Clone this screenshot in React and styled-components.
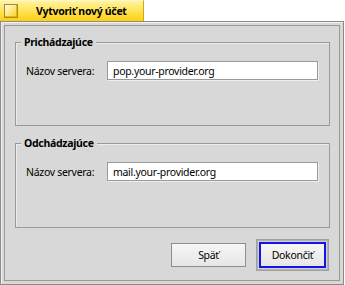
import React from "react";
import styled, { createGlobalStyle } from "styled-components";

const GlobalStyle = createGlobalStyle`
  html, body {
    margin: 0;
    padding: 0;
    background: #ffffff;
  }
  body {
    font-family: "Noto Sans", "DejaVu Sans", sans-serif;
    font-size: 10.5px;
    letter-spacing: -0.3px;
    color: #000000;
  }
`;

const Window = styled.div`
  width: 344px;
  display: flex;
  flex-direction: column;
`;

const Tab = styled.div`
  width: 144px;
  height: 21px;
  box-sizing: border-box;
  display: flex;
  align-items: center;
  padding-left: 4px;
  background: linear-gradient(to bottom, #fff3a6 0%, #ffe55c 45%, #ffcf10 100%);
  border-right: 1px solid #d9a600;
  border-top: 1px solid #fff6c0;
`;

const CloseBox = styled.div`
  flex: none;
  width: 14px;
  height: 14px;
  box-sizing: border-box;
  border: 1px solid #a38a36;
  background: linear-gradient(135deg, #fffbe0 0%, #ffe98a 45%, #ffce20 100%);
  box-shadow: inset -1px -1px 0 #e8b800;
`;

const Title = styled.span`
  margin-left: 18px;
  font-weight: bold;
  white-space: nowrap;
`;

const Frame = styled.div`
  height: 264px;
  box-sizing: border-box;
  border: 1px solid #8a8a8a;
  background: #d8d8d8;
  padding: 3px;
  box-shadow: inset 1px 1px 0 #f2f2f2;
`;

const Content = styled.div`
  height: 100%;
  box-sizing: border-box;
  border: 1px solid #999999;
  background: #d8d8d8;
  padding: 16px 9px 0 10px;
  display: flex;
  flex-direction: column;
`;

const Group = styled.div`
  height: ${(p) => p.$h}px;
  box-sizing: border-box;
  border: 1px solid #9a9a9a;
  box-shadow: inset 1px 1px 0 #ececec;
  display: flex;
  flex-direction: column;
  margin-bottom: ${(p) => p.$gap || 0}px;
`;

const Legend = styled.span`
  align-self: flex-start;
  margin: -9px 0 0 5px;
  padding: 0 3px;
  line-height: 16px;
  background: #d8d8d8;
  font-weight: bold;
`;

const Row = styled.div`
  display: flex;
  align-items: center;
  margin: 11px 0 0 10px;
`;

const Label = styled.span`
  width: 81px;
`;

const Field = styled.div`
  width: 211px;
  height: 19px;
  box-sizing: border-box;
  background: #ffffff;
  border: 1px solid #9a9a9a;
  box-shadow: 1px 1px 0 #eeeeee;
  display: flex;
  align-items: center;
  padding-left: 5px;
`;

const Buttons = styled.div`
  display: flex;
  justify-content: flex-end;
  align-items: center;
  gap: 10px;
  margin-top: 11px;
  padding-right: 1px;
`;

const Button = styled.div`
  width: 75px;
  height: 24px;
  box-sizing: border-box;
  border: 1px solid #8e8e8e;
  background: linear-gradient(to bottom, #f6f6f6 0%, #e6e6e6 100%);
  display: flex;
  align-items: center;
  justify-content: center;
`;

const DefaultFrame = styled.div`
  width: 73px;
  height: 32px;
  box-sizing: border-box;
  padding: 2px;
  background: #b2b2b2;
  border: 1px solid #a0a0a0;
  display: flex;
`;

const DefaultButton = styled(Button)`
  width: 100%;
  height: 100%;
  border: 2px solid #1414e8;
  box-shadow: 0 0 0 1px #d0d0d0;
`;

export default function App() {
  return (
    <>
      <GlobalStyle />
      <Window>
        <Tab>
          <CloseBox />
          <Title>Vytvoriť nový účet</Title>
        </Tab>
        <Frame>
          <Content>
            <Group $h={84} $gap={17}>
              <Legend>Prichádzajúce</Legend>
              <Row>
                <Label>Názov servera:</Label>
                <Field>pop.your-provider.org</Field>
              </Row>
            </Group>
            <Group $h={85}>
              <Legend>Odchádzajúce</Legend>
              <Row>
                <Label>Názov servera:</Label>
                <Field>mail.your-provider.org</Field>
              </Row>
            </Group>
            <Buttons>
              <Button>Späť</Button>
              <DefaultFrame>
                <DefaultButton>Dokončiť</DefaultButton>
              </DefaultFrame>
            </Buttons>
          </Content>
        </Frame>
      </Window>
    </>
  );
}
